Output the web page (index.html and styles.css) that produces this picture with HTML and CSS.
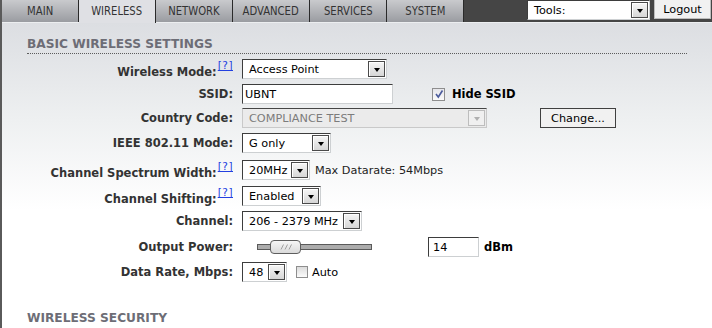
FILE: index.html
```html
<!DOCTYPE html>
<html>
<head>
<meta charset="utf-8">
<title>Wireless</title>
<link rel="stylesheet" href="styles.css">
</head>
<body>
<div class="page">
  <header class="topbar">
    <nav class="tabs">
      <span class="tab"><span class="tab-txt">MAIN</span></span>
      <span class="tab active"><span class="tab-txt">WIRELESS</span></span>
      <span class="tab"><span class="tab-txt">NETWORK</span></span>
      <span class="tab"><span class="tab-txt">ADVANCED</span></span>
      <span class="tab"><span class="tab-txt">SERVICES</span></span>
      <span class="tab"><span class="tab-txt">SYSTEM</span></span>
    </nav>
    <div class="tools">
      <div class="sel tools-sel"><span class="txt">Tools:</span><span class="arr"></span></div>
      <span class="btn logout">Logout</span>
    </div>
  </header>
  <main class="content">
    <h2 class="section-title">BASIC WIRELESS SETTINGS</h2>
    <div class="form">
      <div class="lbl has-help">Wireless Mode:<a class="help">[?]</a></div>
      <div class="ctl"><div class="sel w-mode"><span class="txt">Access Point</span><span class="arr"></span></div></div>

      <div class="lbl">SSID:</div>
      <div class="ctl"><span class="inp w-ssid">UBNT</span><span class="chk checked"><svg viewBox="0 0 10 10" width="10" height="10"><path d="M2 5 L4.3 8 L8.5 1.5" fill="none" stroke="#4b5b9c" stroke-width="1.6"/></svg></span><span class="chk-lbl bold">Hide SSID</span></div>

      <div class="lbl">Country Code:</div>
      <div class="ctl"><div class="sel disabled w-country"><span class="txt">COMPLIANCE TEST</span><span class="arr"></span></div><span class="btn change">Change...</span></div>

      <div class="lbl">IEEE 802.11 Mode:</div>
      <div class="ctl"><div class="sel w-ieee"><span class="txt">G only</span><span class="arr"></span></div></div>

      <div class="lbl has-help">Channel Spectrum Width:<a class="help">[?]</a></div>
      <div class="ctl"><div class="sel w-csw"><span class="txt">20MHz</span><span class="arr"></span></div><span class="note">Max Datarate: 54Mbps</span></div>

      <div class="lbl has-help">Channel Shifting:<a class="help">[?]</a></div>
      <div class="ctl"><div class="sel w-shift"><span class="txt">Enabled</span><span class="arr"></span></div></div>

      <div class="lbl">Channel:</div>
      <div class="ctl"><div class="sel w-chan"><span class="txt">206 - 2379 MHz</span><span class="arr"></span></div></div>

      <div class="lbl">Output Power:</div>
      <div class="ctl"><div class="slider"><span class="thumb"><svg viewBox="0 0 12 6" width="12" height="6"><path d="M1 5.5 L3.5 0.5 M5 5.5 L7.5 0.5 M9 5.5 L11.5 0.5" stroke="#a0a0a0" stroke-width="1" fill="none"/></svg></span></div><span class="inp w-power">14</span><span class="unit bold">dBm</span></div>

      <div class="lbl">Data Rate, Mbps:</div>
      <div class="ctl"><div class="sel w-rate"><span class="txt">48</span><span class="arr"></span></div><span class="chk auto"></span><span class="chk-lbl">Auto</span></div>
    </div>
    <h2 class="section-title security">WIRELESS SECURITY</h2>
  </main>
</div>
</body>
</html>
```

FILE: styles.css
```css
* { box-sizing: border-box; }

body {
  margin: 0;
  background: #fff;
  font-family: "DejaVu Sans", Verdana, sans-serif;
}

.page {
  width: 712px;
  height: 328px;
  overflow: hidden;
  border-left: 2px solid #5a5a5a;
  background: linear-gradient(#dcdee2 23px, #eef0f1 120px, #fff 210px);
}

/* ---------- top bar ---------- */
.topbar {
  display: flex;
  height: 23px;
  background: #454545;
  box-shadow: inset 0 -1px 0 #eceef0;
}

.tabs {
  display: flex;
  align-items: flex-start;
}

.tab {
  width: 77px;
  height: 22px;
  border-right: 1px solid #2a2a2a;
  background: linear-gradient(#c9cacd, #9a9ca1);
  font-family: "DejaVu Sans Condensed", "DejaVu Sans", sans-serif;
  font-stretch: condensed;
  font-size: 13px;
  color: #333;
  display: flex;
  align-items: center;
  justify-content: center;
  padding-bottom: 1px;
}

.tab-txt {
  display: inline-block;
  transform: scaleX(0.86);
  white-space: nowrap;
}

.tab.active {
  height: 23px;
  padding-bottom: 2px;
  background: #dfe0e4;
}

.tools {
  margin-left: auto;
  display: flex;
  align-items: flex-start;
  gap: 4px;
  padding-right: 1px;
}

.tools-sel {
  width: 123px;
  height: 20px;
  border: 1px solid #c4c4c4;
  border-top: none;
  padding-left: 7px;
}

.btn {
  display: flex;
  align-items: center;
  justify-content: center;
  font-size: 11.25px;
  color: #000;
  background: #f1f1f1;
}

.logout {
  width: 57px;
  height: 19px;
  border: 1px solid #bdbdbd;
  border-top: none;
}

/* ---------- content ---------- */
.content {
  padding-top: 14px;
}

.section-title {
  margin: 0 0 0 25px;
  width: 660px;
  font-size: 12.2px;
  line-height: 14px;
  font-weight: bold;
  color: #6d6d76;
  padding-bottom: 2px;
  border-bottom: 1px dotted #5c5c5c;
}

.section-title.security {
  margin-top: 24px;
  padding-bottom: 3px;
}

.form {
  margin-top: 5px;
  display: grid;
  grid-template-columns: 231px auto;
  column-gap: 9px;
  grid-template-rows: 25px 24px 25px 27px 26px 25px 26px 25px 25px;
  align-items: start;
}

.lbl {
  text-align: right;
  font-size: 11.5px;
  font-weight: bold;
  color: #333;
  line-height: 20px;
  height: 20px;
  white-space: nowrap;
}

.lbl.has-help {
  padding-top: 3px;
}

.help {
  font-size: 10.5px;
  font-weight: normal;
  letter-spacing: 0.5px;
  color: #2340e0;
  text-decoration: underline;
  vertical-align: 7px;
  line-height: 0;
  margin-left: 1px;
}

.ctl {
  display: flex;
  align-items: center;
  height: 20px;
  font-size: 11.25px;
  color: #000;
}

/* select look-alike */
.sel {
  display: flex;
  align-items: center;
  height: 20px;
  background: #fff;
  border: 1px solid;
  border-color: #3d3d3d #cdd0d2 #cdd0d2 #3d3d3d;
  padding-left: 6px;
  padding-right: 1px;
  font-size: 11.25px;
  color: #000;
  white-space: nowrap;
}

.sel .txt { flex: 1; }

.sel .arr {
  width: 17px;
  height: 16px;
  flex: none;
  border: 1px solid #4a4a4a;
  background: linear-gradient(#f6f6f6, #d6d6d6);
  box-shadow: inset 1px 1px 0 #fff;
  display: flex;
  align-items: center;
  justify-content: center;
  padding-top: 1px;
}

.sel .arr::before {
  content: "";
  border-left: 3.5px solid transparent;
  border-right: 3.5px solid transparent;
  border-top: 4px solid #000;
}

.sel.disabled {
  background: #ebebeb;
  border-color: #454545 #c9c9c9 #c9c9c9 #c9c9c9;
  color: #7c7c7c;
}

.sel.disabled .arr {
  border-color: #bdbdbd;
  background: #f0f0f0;
  box-shadow: none;
}

.sel.disabled .arr::before {
  border-top-color: #b0b0b0;
}

.w-mode { width: 145px; }
.w-country { width: 245px; }
.w-ieee { width: 89px; }
.w-csw { width: 68px; }
.w-shift { width: 79px; }
.w-chan { width: 120px; }
.w-rate { width: 45px; }

.inp {
  display: flex;
  align-items: center;
  height: 20px;
  background: #fff;
  border: 1px solid;
  border-color: #3d3d3d #cdd0d2 #cdd0d2 #3d3d3d;
  padding-left: 2px;
}

.w-ssid { width: 151px; }
.w-power { width: 51px; padding-left: 4px; margin-left: 56px; }

.chk {
  width: 13px;
  height: 13px;
  flex: none;
  border: 1px solid #8e8e8e;
  background: linear-gradient(#dcdcdc, #fbfbfb);
  display: flex;
  align-items: center;
  justify-content: center;
}

.chk.checked {
  margin-left: 39px;
  background: linear-gradient(#e6e6ea, #fafafa);
}

.chk.auto {
  margin-left: 9px;
  width: 12px;
  height: 12px;
}

.chk-lbl {
  margin-left: 7px;
}

.chk.auto + .chk-lbl {
  margin-left: 4px;
}

.bold {
  font-weight: bold;
  font-size: 11.5px;
}

.change {
  width: 76px;
  height: 20px;
  margin-left: 53px;
  border: 1px solid #404040;
}

.note {
  margin-left: 5px;
  color: #222;
}

.slider {
  position: relative;
  width: 115px;
  height: 6px;
  margin-left: 15px;
  border: 1px solid #5a5a5a;
  background: #acacac;
}

.thumb {
  position: absolute;
  left: 12px;
  top: -5px;
  width: 31px;
  height: 14px;
  border: 1px solid #5e5e5e;
  border-radius: 4px;
  background: linear-gradient(#f6f6f6, #dadada);
  display: flex;
  align-items: center;
  justify-content: center;
}

.unit {
  margin-left: 5px;
}
```
